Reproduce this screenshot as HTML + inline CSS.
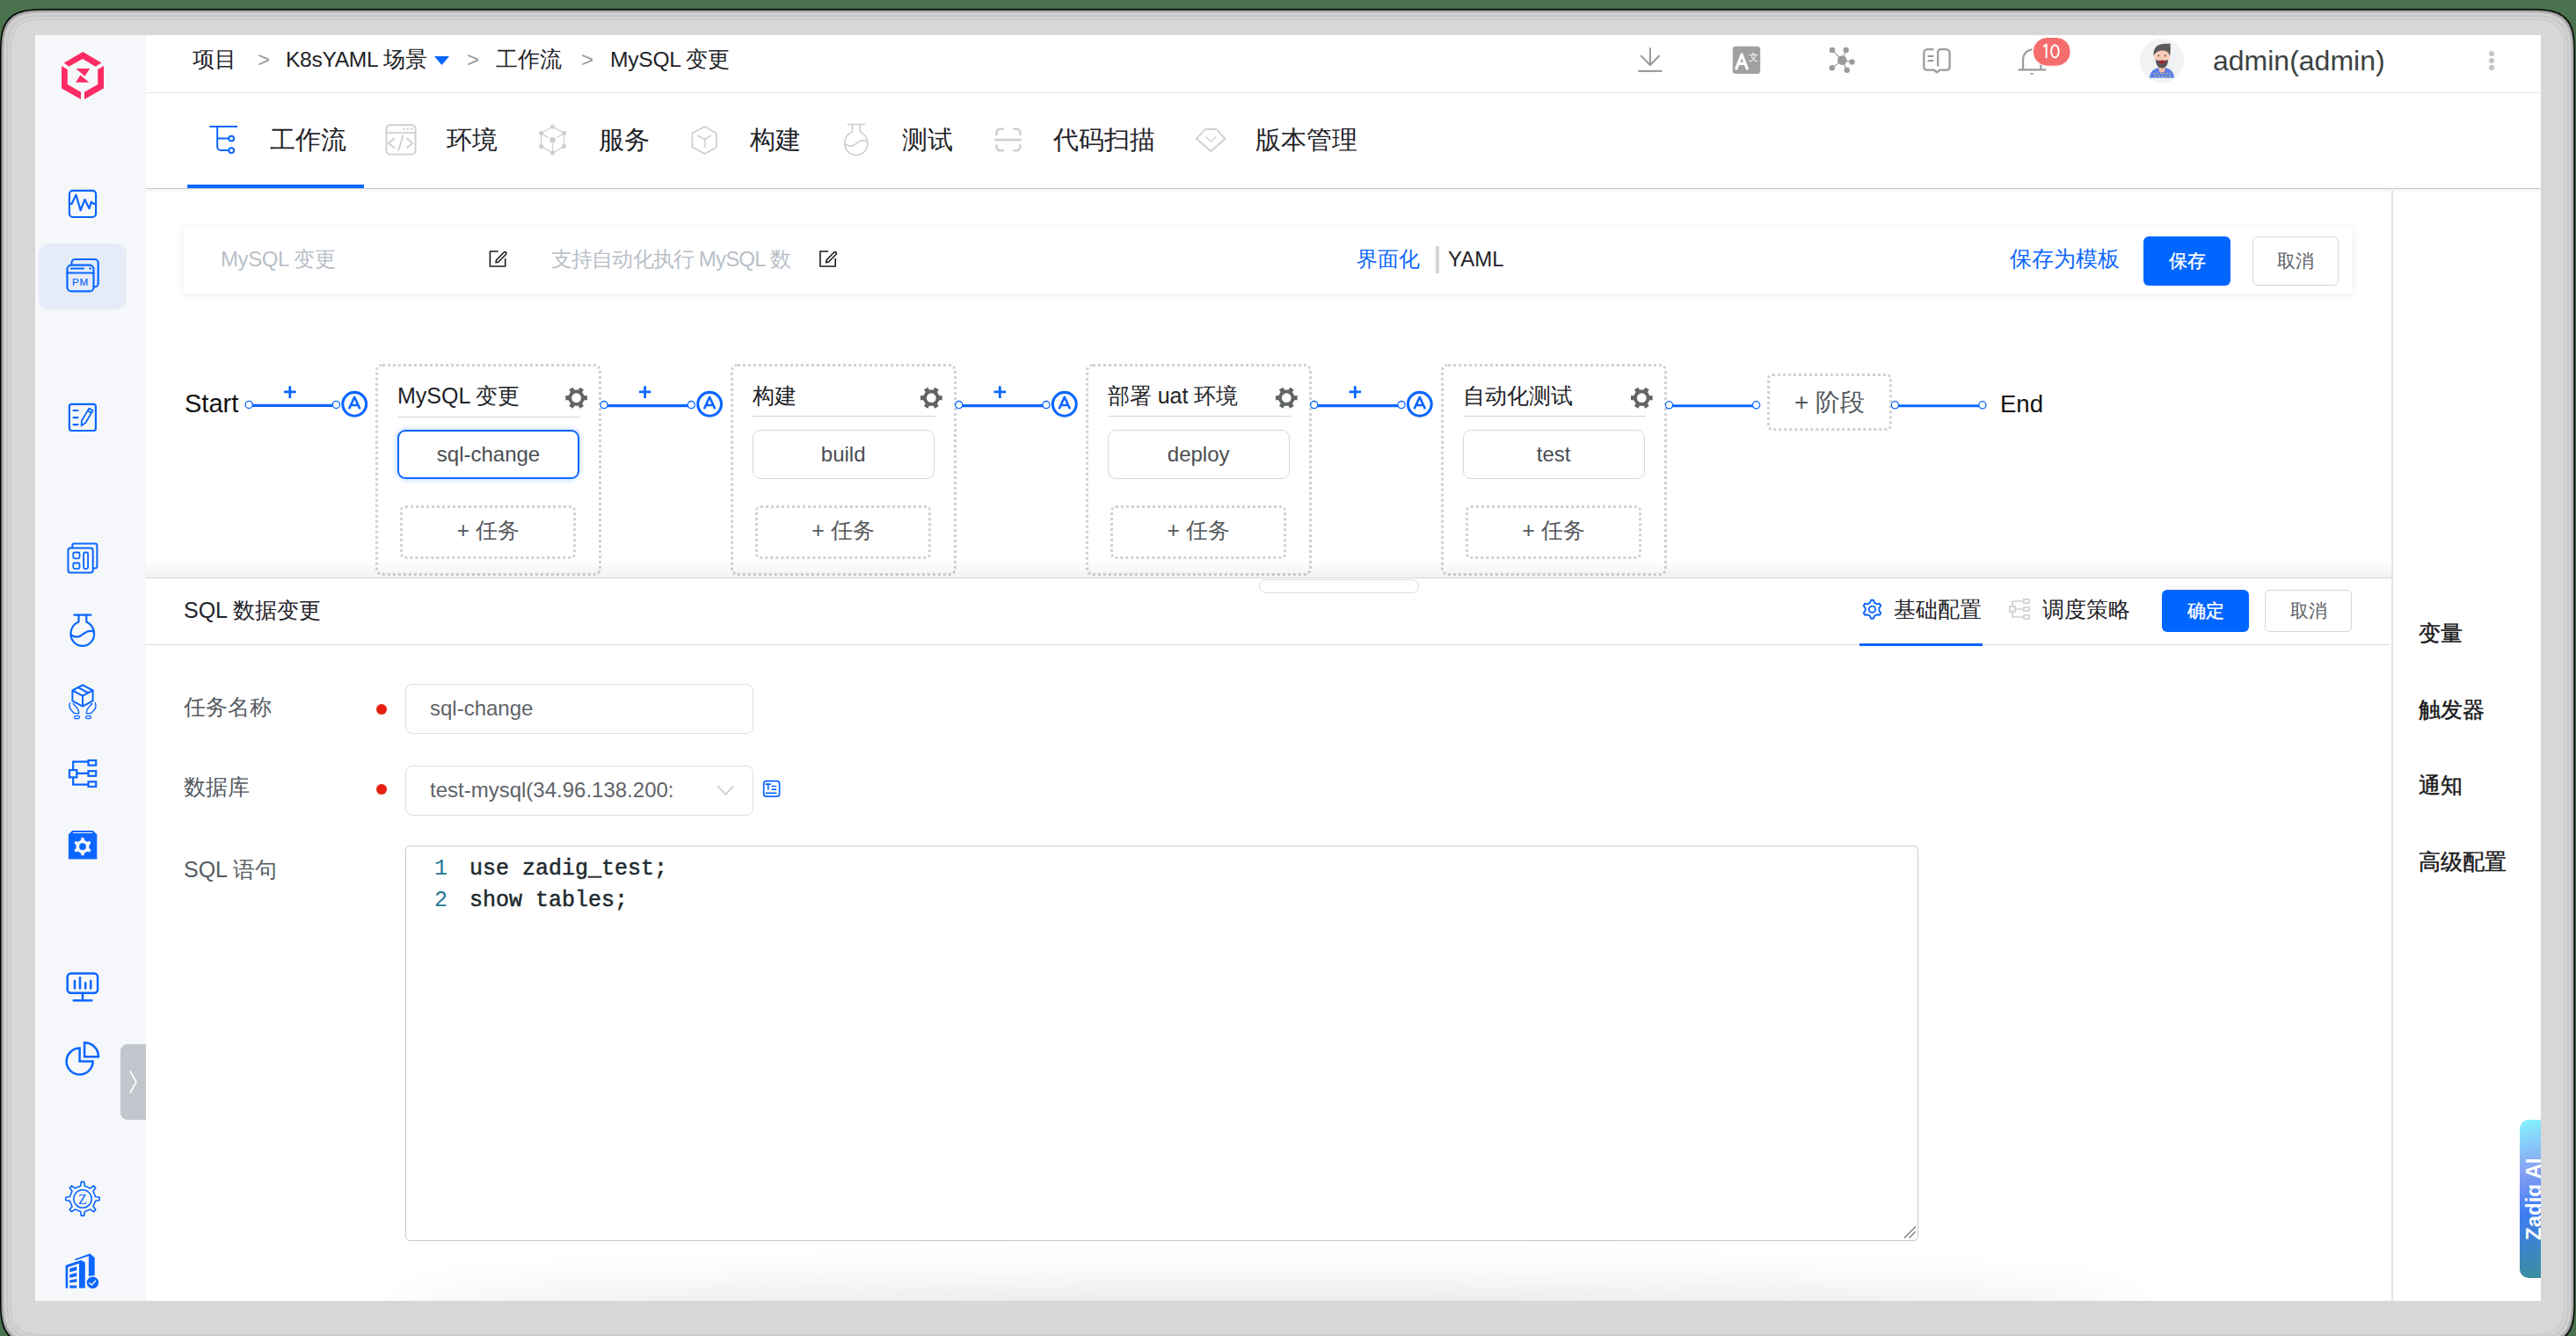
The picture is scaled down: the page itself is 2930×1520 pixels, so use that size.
<!DOCTYPE html>
<html><head><meta charset="utf-8">
<style>
*{margin:0;padding:0;box-sizing:border-box;}
html,body{width:2930px;height:1520px;overflow:hidden;background:#4a724e;font-family:"Liberation Sans",sans-serif;}
.a{position:absolute;}
.t{position:absolute;white-space:nowrap;line-height:1;}
svg{position:absolute;overflow:visible;}
#frame{position:absolute;left:0px;top:10px;width:2929px;height:1530px;border-radius:52px;background:#d7d7d7;border:1.5px solid #000;box-shadow:inset 0 0 0 1px #8e8e8e, inset 0 0 0 2px #a6a6a6, inset 0 0 0 4px #c8c8c8, inset 0 0 0 5px #d6d6d6, inset 0 0 0 6px #c4c4c4, inset 0 0 0 9px #d4d4d4, inset 0 0 0 10px #cacaca;}
#app{position:absolute;left:40px;top:40px;width:2850px;height:1440px;background:#fff;overflow:hidden;}
#side{position:absolute;left:0;top:0;width:126px;height:1440px;background:#f5f7fa;}
.bc{font-size:24.6px;color:#1f2329;}
.gt{color:#9a9a9a;font-size:24px;}
.tab{font-size:28.6px;color:#1f2329;}
.tb{font-size:24px;}
.btn{position:absolute;border-radius:6px;font-size:21px;text-align:center;}
.stage{position:absolute;top:374px;width:257px;height:241px;border:3px dotted #cdd2d9;border-radius:8px;}
.stitle{position:absolute;font-size:25px;color:#1f2329;white-space:nowrap;line-height:1;}
.sdiv{position:absolute;height:1.3px;background:#d0d5dc;}
.job{position:absolute;height:56px;border:1.5px solid #d3d8df;border-radius:9px;font-size:24px;color:#4a4d52;text-align:center;line-height:53px;}
.addjob{position:absolute;height:61px;border:3px dotted #cdd2d9;border-radius:6px;font-size:25px;color:#55595e;text-align:center;line-height:51px;}
.lbl{font-size:25px;color:#555b61;}
.inp{position:absolute;border:1.5px solid #dcdfe6;border-radius:8px;background:#fff;}
.rc{font-size:25px;color:#1a1a1a;-webkit-text-stroke:0.45px #1a1a1a;}
</style></head><body><svg style="position:absolute;left:0;top:0;" width="2930" height="1520"><path d="M2929.00 66.00 L2928.93 54.74 L2928.72 49.10 L2928.36 44.59 L2927.87 40.71 L2927.23 37.28 L2926.45 34.17 L2925.53 31.34 L2924.46 28.75 L2923.24 26.37 L2921.87 24.18 L2920.35 22.17 L2918.67 20.33 L2916.83 18.65 L2914.82 17.13 L2912.63 15.76 L2910.25 14.54 L2907.66 13.47 L2904.83 12.55 L2901.72 11.77 L2898.29 11.13 L2894.41 10.64 L2889.90 10.28 L2884.26 10.07 L2873.00 10.00 L56.00 10.00 L44.74 10.07 L39.10 10.28 L34.59 10.64 L30.71 11.13 L27.28 11.77 L24.17 12.55 L21.34 13.47 L18.75 14.54 L16.37 15.76 L14.18 17.13 L12.17 18.65 L10.33 20.33 L8.65 22.17 L7.13 24.18 L5.76 26.37 L4.54 28.75 L3.47 31.34 L2.55 34.17 L1.77 37.28 L1.13 40.71 L0.64 44.59 L0.28 49.10 L0.07 54.74 L0.00 66.00 L0.00 1475.00 L0.07 1486.26 L0.28 1491.90 L0.64 1496.41 L1.13 1500.29 L1.77 1503.72 L2.55 1506.83 L3.47 1509.66 L4.54 1512.25 L5.76 1514.63 L7.13 1516.82 L8.65 1518.83 L10.33 1520.67 L12.17 1522.35 L14.18 1523.87 L16.37 1525.24 L18.75 1526.46 L21.34 1527.53 L24.17 1528.45 L27.28 1529.23 L30.71 1529.87 L34.59 1530.36 L39.10 1530.72 L44.74 1530.93 L56.00 1531.00 L2873.00 1531.00 L2884.26 1530.93 L2889.90 1530.72 L2894.41 1530.36 L2898.29 1529.87 L2901.72 1529.23 L2904.83 1528.45 L2907.66 1527.53 L2910.25 1526.46 L2912.63 1525.24 L2914.82 1523.87 L2916.83 1522.35 L2918.67 1520.67 L2920.35 1518.83 L2921.87 1516.82 L2923.24 1514.63 L2924.46 1512.25 L2925.53 1509.66 L2926.45 1506.83 L2927.23 1503.72 L2927.87 1500.29 L2928.36 1496.41 L2928.72 1491.90 L2928.93 1486.26 L2929.00 1475.00Z" fill="#000"/><path d="M2927.60 66.00 L2927.53 55.02 L2927.32 49.52 L2926.98 45.12 L2926.50 41.35 L2925.88 37.99 L2925.12 34.97 L2924.21 32.21 L2923.17 29.68 L2921.98 27.36 L2920.65 25.22 L2919.17 23.26 L2917.53 21.47 L2915.74 19.83 L2913.78 18.35 L2911.64 17.02 L2909.32 15.83 L2906.79 14.79 L2904.03 13.88 L2901.01 13.12 L2897.65 12.50 L2893.88 12.02 L2889.48 11.68 L2883.98 11.47 L2873.00 11.40 L56.00 11.40 L45.02 11.47 L39.52 11.68 L35.12 12.02 L31.35 12.50 L27.99 13.12 L24.97 13.88 L22.21 14.79 L19.68 15.83 L17.36 17.02 L15.22 18.35 L13.26 19.83 L11.47 21.47 L9.83 23.26 L8.35 25.22 L7.02 27.36 L5.83 29.68 L4.79 32.21 L3.88 34.97 L3.12 37.99 L2.50 41.35 L2.02 45.12 L1.68 49.52 L1.47 55.02 L1.40 66.00 L1.40 1475.00 L1.47 1485.98 L1.68 1491.48 L2.02 1495.88 L2.50 1499.65 L3.12 1503.01 L3.88 1506.03 L4.79 1508.79 L5.83 1511.32 L7.02 1513.64 L8.35 1515.78 L9.83 1517.74 L11.47 1519.53 L13.26 1521.17 L15.22 1522.65 L17.36 1523.98 L19.68 1525.17 L22.21 1526.21 L24.97 1527.12 L27.99 1527.88 L31.35 1528.50 L35.12 1528.98 L39.52 1529.32 L45.02 1529.53 L56.00 1529.60 L2873.00 1529.60 L2883.98 1529.53 L2889.48 1529.32 L2893.88 1528.98 L2897.65 1528.50 L2901.01 1527.88 L2904.03 1527.12 L2906.79 1526.21 L2909.32 1525.17 L2911.64 1523.98 L2913.78 1522.65 L2915.74 1521.17 L2917.53 1519.53 L2919.17 1517.74 L2920.65 1515.78 L2921.98 1513.64 L2923.17 1511.32 L2924.21 1508.79 L2925.12 1506.03 L2925.88 1503.01 L2926.50 1499.65 L2926.98 1495.88 L2927.32 1491.48 L2927.53 1485.98 L2927.60 1475.00Z" fill="#8e8e8e"/><path d="M2926.60 66.00 L2926.53 55.22 L2926.33 49.82 L2925.99 45.50 L2925.52 41.80 L2924.91 38.51 L2924.16 35.54 L2923.28 32.83 L2922.25 30.35 L2921.09 28.07 L2919.78 25.97 L2918.32 24.05 L2916.71 22.29 L2914.95 20.68 L2913.03 19.22 L2910.93 17.91 L2908.65 16.75 L2906.17 15.72 L2903.46 14.84 L2900.49 14.09 L2897.20 13.48 L2893.50 13.01 L2889.18 12.67 L2883.78 12.47 L2873.00 12.40 L56.00 12.40 L45.22 12.47 L39.82 12.67 L35.50 13.01 L31.80 13.48 L28.51 14.09 L25.54 14.84 L22.83 15.72 L20.35 16.75 L18.07 17.91 L15.97 19.22 L14.05 20.68 L12.29 22.29 L10.68 24.05 L9.22 25.97 L7.91 28.07 L6.75 30.35 L5.72 32.83 L4.84 35.54 L4.09 38.51 L3.48 41.80 L3.01 45.50 L2.67 49.82 L2.47 55.22 L2.40 66.00 L2.40 1475.00 L2.47 1485.78 L2.67 1491.18 L3.01 1495.50 L3.48 1499.20 L4.09 1502.49 L4.84 1505.46 L5.72 1508.17 L6.75 1510.65 L7.91 1512.93 L9.22 1515.03 L10.68 1516.95 L12.29 1518.71 L14.05 1520.32 L15.97 1521.78 L18.07 1523.09 L20.35 1524.25 L22.83 1525.28 L25.54 1526.16 L28.51 1526.91 L31.80 1527.52 L35.50 1527.99 L39.82 1528.33 L45.22 1528.53 L56.00 1528.60 L2873.00 1528.60 L2883.78 1528.53 L2889.18 1528.33 L2893.50 1527.99 L2897.20 1527.52 L2900.49 1526.91 L2903.46 1526.16 L2906.17 1525.28 L2908.65 1524.25 L2910.93 1523.09 L2913.03 1521.78 L2914.95 1520.32 L2916.71 1518.71 L2918.32 1516.95 L2919.78 1515.03 L2921.09 1512.93 L2922.25 1510.65 L2923.28 1508.17 L2924.16 1505.46 L2924.91 1502.49 L2925.52 1499.20 L2925.99 1495.50 L2926.33 1491.18 L2926.53 1485.78 L2926.60 1475.00Z" fill="#a9a9a9"/><path d="M2925.40 66.00 L2925.33 55.47 L2925.14 50.18 L2924.81 45.96 L2924.34 42.34 L2923.75 39.12 L2923.02 36.22 L2922.15 33.57 L2921.15 31.15 L2920.01 28.92 L2918.73 26.87 L2917.31 24.99 L2915.74 23.26 L2914.01 21.69 L2912.13 20.27 L2910.08 18.99 L2907.85 17.85 L2905.43 16.85 L2902.78 15.98 L2899.88 15.25 L2896.66 14.66 L2893.04 14.19 L2888.82 13.86 L2883.53 13.67 L2873.00 13.60 L56.00 13.60 L45.47 13.67 L40.18 13.86 L35.96 14.19 L32.34 14.66 L29.12 15.25 L26.22 15.98 L23.57 16.85 L21.15 17.85 L18.92 18.99 L16.87 20.27 L14.99 21.69 L13.26 23.26 L11.69 24.99 L10.27 26.87 L8.99 28.92 L7.85 31.15 L6.85 33.57 L5.98 36.22 L5.25 39.12 L4.66 42.34 L4.19 45.96 L3.86 50.18 L3.67 55.47 L3.60 66.00 L3.60 1475.00 L3.67 1485.53 L3.86 1490.82 L4.19 1495.04 L4.66 1498.66 L5.25 1501.88 L5.98 1504.78 L6.85 1507.43 L7.85 1509.85 L8.99 1512.08 L10.27 1514.13 L11.69 1516.01 L13.26 1517.74 L14.99 1519.31 L16.87 1520.73 L18.92 1522.01 L21.15 1523.15 L23.57 1524.15 L26.22 1525.02 L29.12 1525.75 L32.34 1526.34 L35.96 1526.81 L40.18 1527.14 L45.47 1527.33 L56.00 1527.40 L2873.00 1527.40 L2883.53 1527.33 L2888.82 1527.14 L2893.04 1526.81 L2896.66 1526.34 L2899.88 1525.75 L2902.78 1525.02 L2905.43 1524.15 L2907.85 1523.15 L2910.08 1522.01 L2912.13 1520.73 L2914.01 1519.31 L2915.74 1517.74 L2917.31 1516.01 L2918.73 1514.13 L2920.01 1512.08 L2921.15 1509.85 L2922.15 1507.43 L2923.02 1504.78 L2923.75 1501.88 L2924.34 1498.66 L2924.81 1495.04 L2925.14 1490.82 L2925.33 1485.53 L2925.40 1475.00Z" fill="#c3c3c3"/><path d="M2924.00 66.00 L2923.94 55.75 L2923.74 50.60 L2923.42 46.50 L2922.97 42.97 L2922.39 39.84 L2921.68 37.01 L2920.84 34.44 L2919.86 32.08 L2918.75 29.91 L2917.51 27.91 L2916.12 26.08 L2914.59 24.41 L2912.92 22.88 L2911.09 21.49 L2909.09 20.25 L2906.92 19.14 L2904.56 18.16 L2901.99 17.32 L2899.16 16.61 L2896.03 16.03 L2892.50 15.58 L2888.40 15.26 L2883.25 15.06 L2873.00 15.00 L56.00 15.00 L45.75 15.06 L40.60 15.26 L36.50 15.58 L32.97 16.03 L29.84 16.61 L27.01 17.32 L24.44 18.16 L22.08 19.14 L19.91 20.25 L17.91 21.49 L16.08 22.88 L14.41 24.41 L12.88 26.08 L11.49 27.91 L10.25 29.91 L9.14 32.08 L8.16 34.44 L7.32 37.01 L6.61 39.84 L6.03 42.97 L5.58 46.50 L5.26 50.60 L5.06 55.75 L5.00 66.00 L5.00 1475.00 L5.06 1485.25 L5.26 1490.40 L5.58 1494.50 L6.03 1498.03 L6.61 1501.16 L7.32 1503.99 L8.16 1506.56 L9.14 1508.92 L10.25 1511.09 L11.49 1513.09 L12.88 1514.92 L14.41 1516.59 L16.08 1518.12 L17.91 1519.51 L19.91 1520.75 L22.08 1521.86 L24.44 1522.84 L27.01 1523.68 L29.84 1524.39 L32.97 1524.97 L36.50 1525.42 L40.60 1525.74 L45.75 1525.94 L56.00 1526.00 L2873.00 1526.00 L2883.25 1525.94 L2888.40 1525.74 L2892.50 1525.42 L2896.03 1524.97 L2899.16 1524.39 L2901.99 1523.68 L2904.56 1522.84 L2906.92 1521.86 L2909.09 1520.75 L2911.09 1519.51 L2912.92 1518.12 L2914.59 1516.59 L2916.12 1514.92 L2917.51 1513.09 L2918.75 1511.09 L2919.86 1508.92 L2920.84 1506.56 L2921.68 1503.99 L2922.39 1501.16 L2922.97 1498.03 L2923.42 1494.50 L2923.74 1490.40 L2923.94 1485.25 L2924.00 1475.00Z" fill="#d2d2d2"/><path d="M2922.00 66.00 L2921.94 56.15 L2921.75 51.21 L2921.44 47.26 L2921.01 43.87 L2920.45 40.87 L2919.77 38.15 L2918.96 35.68 L2918.02 33.41 L2916.96 31.32 L2915.76 29.41 L2914.43 27.65 L2912.96 26.04 L2911.35 24.57 L2909.59 23.24 L2907.68 22.04 L2905.59 20.98 L2903.32 20.04 L2900.85 19.23 L2898.13 18.55 L2895.13 17.99 L2891.74 17.56 L2887.79 17.25 L2882.85 17.06 L2873.00 17.00 L56.00 17.00 L46.15 17.06 L41.21 17.25 L37.26 17.56 L33.87 17.99 L30.87 18.55 L28.15 19.23 L25.68 20.04 L23.41 20.98 L21.32 22.04 L19.41 23.24 L17.65 24.57 L16.04 26.04 L14.57 27.65 L13.24 29.41 L12.04 31.32 L10.98 33.41 L10.04 35.68 L9.23 38.15 L8.55 40.87 L7.99 43.87 L7.56 47.26 L7.25 51.21 L7.06 56.15 L7.00 66.00 L7.00 1475.00 L7.06 1484.85 L7.25 1489.79 L7.56 1493.74 L7.99 1497.13 L8.55 1500.13 L9.23 1502.85 L10.04 1505.32 L10.98 1507.59 L12.04 1509.68 L13.24 1511.59 L14.57 1513.35 L16.04 1514.96 L17.65 1516.43 L19.41 1517.76 L21.32 1518.96 L23.41 1520.02 L25.68 1520.96 L28.15 1521.77 L30.87 1522.45 L33.87 1523.01 L37.26 1523.44 L41.21 1523.75 L46.15 1523.94 L56.00 1524.00 L2873.00 1524.00 L2882.85 1523.94 L2887.79 1523.75 L2891.74 1523.44 L2895.13 1523.01 L2898.13 1522.45 L2900.85 1521.77 L2903.32 1520.96 L2905.59 1520.02 L2907.68 1518.96 L2909.59 1517.76 L2911.35 1516.43 L2912.96 1514.96 L2914.43 1513.35 L2915.76 1511.59 L2916.96 1509.68 L2918.02 1507.59 L2918.96 1505.32 L2919.77 1502.85 L2920.45 1500.13 L2921.01 1497.13 L2921.44 1493.74 L2921.75 1489.79 L2921.94 1484.85 L2922.00 1475.00Z" fill="#c8c8c8"/><path d="M2920.00 66.00 L2919.94 56.55 L2919.76 51.81 L2919.47 48.03 L2919.05 44.78 L2918.52 41.89 L2917.86 39.29 L2917.09 36.91 L2916.19 34.74 L2915.16 32.74 L2914.02 30.90 L2912.74 29.21 L2911.33 27.67 L2909.79 26.26 L2908.10 24.98 L2906.26 23.84 L2904.26 22.81 L2902.09 21.91 L2899.71 21.14 L2897.11 20.48 L2894.22 19.95 L2890.97 19.53 L2887.19 19.24 L2882.45 19.06 L2873.00 19.00 L56.00 19.00 L46.55 19.06 L41.81 19.24 L38.03 19.53 L34.78 19.95 L31.89 20.48 L29.29 21.14 L26.91 21.91 L24.74 22.81 L22.74 23.84 L20.90 24.98 L19.21 26.26 L17.67 27.67 L16.26 29.21 L14.98 30.90 L13.84 32.74 L12.81 34.74 L11.91 36.91 L11.14 39.29 L10.48 41.89 L9.95 44.78 L9.53 48.03 L9.24 51.81 L9.06 56.55 L9.00 66.00 L9.00 1475.00 L9.06 1484.45 L9.24 1489.19 L9.53 1492.97 L9.95 1496.22 L10.48 1499.11 L11.14 1501.71 L11.91 1504.09 L12.81 1506.26 L13.84 1508.26 L14.98 1510.10 L16.26 1511.79 L17.67 1513.33 L19.21 1514.74 L20.90 1516.02 L22.74 1517.16 L24.74 1518.19 L26.91 1519.09 L29.29 1519.86 L31.89 1520.52 L34.78 1521.05 L38.03 1521.47 L41.81 1521.76 L46.55 1521.94 L56.00 1522.00 L2873.00 1522.00 L2882.45 1521.94 L2887.19 1521.76 L2890.97 1521.47 L2894.22 1521.05 L2897.11 1520.52 L2899.71 1519.86 L2902.09 1519.09 L2904.26 1518.19 L2906.26 1517.16 L2908.10 1516.02 L2909.79 1514.74 L2911.33 1513.33 L2912.74 1511.79 L2914.02 1510.10 L2915.16 1508.26 L2916.19 1506.26 L2917.09 1504.09 L2917.86 1501.71 L2918.52 1499.11 L2919.05 1496.22 L2919.47 1492.97 L2919.76 1489.19 L2919.94 1484.45 L2920.00 1475.00Z" fill="#d3d3d3"/><path d="M2918.00 66.00 L2917.94 56.95 L2917.77 52.42 L2917.49 48.79 L2917.09 45.68 L2916.58 42.92 L2915.95 40.42 L2915.21 38.15 L2914.35 36.07 L2913.37 34.15 L2912.27 32.39 L2911.05 30.78 L2909.70 29.30 L2908.22 27.95 L2906.61 26.73 L2904.85 25.63 L2902.93 24.65 L2900.85 23.79 L2898.58 23.05 L2896.08 22.42 L2893.32 21.91 L2890.21 21.51 L2886.58 21.23 L2882.05 21.06 L2873.00 21.00 L56.00 21.00 L46.95 21.06 L42.42 21.23 L38.79 21.51 L35.68 21.91 L32.92 22.42 L30.42 23.05 L28.15 23.79 L26.07 24.65 L24.15 25.63 L22.39 26.73 L20.78 27.95 L19.30 29.30 L17.95 30.78 L16.73 32.39 L15.63 34.15 L14.65 36.07 L13.79 38.15 L13.05 40.42 L12.42 42.92 L11.91 45.68 L11.51 48.79 L11.23 52.42 L11.06 56.95 L11.00 66.00 L11.00 1475.00 L11.06 1484.05 L11.23 1488.58 L11.51 1492.21 L11.91 1495.32 L12.42 1498.08 L13.05 1500.58 L13.79 1502.85 L14.65 1504.93 L15.63 1506.85 L16.73 1508.61 L17.95 1510.22 L19.30 1511.70 L20.78 1513.05 L22.39 1514.27 L24.15 1515.37 L26.07 1516.35 L28.15 1517.21 L30.42 1517.95 L32.92 1518.58 L35.68 1519.09 L38.79 1519.49 L42.42 1519.77 L46.95 1519.94 L56.00 1520.00 L2873.00 1520.00 L2882.05 1519.94 L2886.58 1519.77 L2890.21 1519.49 L2893.32 1519.09 L2896.08 1518.58 L2898.58 1517.95 L2900.85 1517.21 L2902.93 1516.35 L2904.85 1515.37 L2906.61 1514.27 L2908.22 1513.05 L2909.70 1511.70 L2911.05 1510.22 L2912.27 1508.61 L2913.37 1506.85 L2914.35 1504.93 L2915.21 1502.85 L2915.95 1500.58 L2916.58 1498.08 L2917.09 1495.32 L2917.49 1492.21 L2917.77 1488.58 L2917.94 1484.05 L2918.00 1475.00Z" fill="#cdcdcd"/><path d="M2916.00 66.00 L2915.95 57.36 L2915.78 53.02 L2915.51 49.56 L2915.13 46.58 L2914.64 43.94 L2914.04 41.56 L2913.33 39.39 L2912.51 37.40 L2911.58 35.57 L2910.53 33.89 L2909.36 32.34 L2908.07 30.93 L2906.66 29.64 L2905.11 28.47 L2903.43 27.42 L2901.60 26.49 L2899.61 25.67 L2897.44 24.96 L2895.06 24.36 L2892.42 23.87 L2889.44 23.49 L2885.98 23.22 L2881.64 23.05 L2873.00 23.00 L56.00 23.00 L47.36 23.05 L43.02 23.22 L39.56 23.49 L36.58 23.87 L33.94 24.36 L31.56 24.96 L29.39 25.67 L27.40 26.49 L25.57 27.42 L23.89 28.47 L22.34 29.64 L20.93 30.93 L19.64 32.34 L18.47 33.89 L17.42 35.57 L16.49 37.40 L15.67 39.39 L14.96 41.56 L14.36 43.94 L13.87 46.58 L13.49 49.56 L13.22 53.02 L13.05 57.36 L13.00 66.00 L13.00 1475.00 L13.05 1483.64 L13.22 1487.98 L13.49 1491.44 L13.87 1494.42 L14.36 1497.06 L14.96 1499.44 L15.67 1501.61 L16.49 1503.60 L17.42 1505.43 L18.47 1507.11 L19.64 1508.66 L20.93 1510.07 L22.34 1511.36 L23.89 1512.53 L25.57 1513.58 L27.40 1514.51 L29.39 1515.33 L31.56 1516.04 L33.94 1516.64 L36.58 1517.13 L39.56 1517.51 L43.02 1517.78 L47.36 1517.95 L56.00 1518.00 L2873.00 1518.00 L2881.64 1517.95 L2885.98 1517.78 L2889.44 1517.51 L2892.42 1517.13 L2895.06 1516.64 L2897.44 1516.04 L2899.61 1515.33 L2901.60 1514.51 L2903.43 1513.58 L2905.11 1512.53 L2906.66 1511.36 L2908.07 1510.07 L2909.36 1508.66 L2910.53 1507.11 L2911.58 1505.43 L2912.51 1503.60 L2913.33 1501.61 L2914.04 1499.44 L2914.64 1497.06 L2915.13 1494.42 L2915.51 1491.44 L2915.78 1487.98 L2915.95 1483.64 L2916.00 1475.00Z" fill="#d7d7d7"/></svg>
<div id="app"></div>
<div class="a" style="left:40px;top:40px;width:126px;height:1440px;background:#f5f7fa;"></div>
<div class="a" style="left:44px;top:277px;width:100px;height:75px;border-radius:12px;background:#e5ecf8;"></div>
<!-- header -->
<div class="a" style="left:166px;top:105px;width:2724px;height:1px;background:#e4e7eb;"></div>
<span class="t bc" style="left:219px;top:56px;">项目</span>
<span class="t gt" style="left:293px;top:56px;">&gt;</span>
<span class="t bc" style="left:325px;top:56px;letter-spacing:-0.3px;">K8sYAML 场景</span>
<svg style="left:494px;top:64px;" width="17" height="11"><path d="M0 0H17L8.5 10Z" fill="#0a66ff"/></svg>
<span class="t gt" style="left:531px;top:56px;">&gt;</span>
<span class="t bc" style="left:564px;top:56px;">工作流</span>
<span class="t gt" style="left:661px;top:56px;">&gt;</span>
<span class="t bc" style="left:694px;top:56px;letter-spacing:-0.25px;">MySQL 变更</span>
<!-- nav -->
<div class="a" style="left:166px;top:214px;width:2724px;height:7px;background:linear-gradient(rgba(0,0,0,0.045),rgba(0,0,0,0));"></div><div class="a" style="left:166px;top:213.5px;width:2724px;height:1.5px;background:#c6cacf;"></div>
<div class="a" style="left:213px;top:210px;width:201px;height:4px;background:#0a66ff;"></div>
<span class="t tab" style="left:307px;top:145px;">工作流</span>
<span class="t tab" style="left:508px;top:145px;">环境</span>
<span class="t tab" style="left:681px;top:145px;">服务</span>
<span class="t tab" style="left:853px;top:145px;">构建</span>
<span class="t tab" style="left:1026px;top:145px;">测试</span>
<span class="t tab" style="left:1198px;top:145px;">代码扫描</span>
<span class="t tab" style="left:1428px;top:145px;">版本管理</span>
<!-- user -->
<div class="a" style="left:2434px;top:44px;width:50px;height:50px;border-radius:50%;background:#f0f1f4;"></div>
<span class="t" style="left:2517px;top:52.5px;font-size:32px;color:#3b4242;">admin(admin)</span>
<div class="a" style="left:2831px;top:58px;width:6px;height:6px;border-radius:50%;background:#c4c4c4;"></div>
<div class="a" style="left:2831px;top:66px;width:6px;height:6px;border-radius:50%;background:#c4c4c4;"></div>
<div class="a" style="left:2831px;top:74px;width:6px;height:6px;border-radius:50%;background:#c4c4c4;"></div>
<!-- right column -->
<div class="a" style="left:2720px;top:214px;width:2px;height:1266px;background:#e3e6eb;"></div>
<span class="t rc" style="left:2751px;top:708px;">变量</span>
<span class="t rc" style="left:2751px;top:795px;">触发器</span>
<span class="t rc" style="left:2751px;top:881px;">通知</span>
<span class="t rc" style="left:2751px;top:968px;">高级配置</span>
<!-- toolbar -->
<div class="a" style="left:209px;top:258px;width:2466px;height:76px;background:#fff;box-shadow:0 2px 10px rgba(0,0,0,0.08);"></div>
<span class="t tb" style="left:251px;top:283px;color:#b9bfc8;letter-spacing:-0.4px;">MySQL 变更</span>
<span class="t tb" style="left:627px;top:283px;color:#b9bfc8;letter-spacing:-0.85px;">支持自动化执行 MySQL 数</span>
<span class="t tb" style="left:1543px;top:283px;color:#0a66ff;">界面化</span>
<div class="a" style="left:1633px;top:280px;width:4px;height:31px;background:#d3d6db;"></div>
<span class="t tb" style="left:1647px;top:283px;color:#1f2329;">YAML</span>
<span class="t tb" style="left:2286px;top:282px;color:#0a66ff;font-size:25px;">保存为模板</span>
<div class="btn" style="left:2438px;top:269px;width:99px;height:56px;background:#0066ff;color:#fff;line-height:56px;-webkit-text-stroke:0.35px #fff;">保存</div>
<div class="btn" style="left:2562px;top:269px;width:98px;height:56px;border:1.5px solid #d3d7de;color:#5a5e66;line-height:53px;">取消</div>
<!-- pipeline -->
<span class="t" style="left:210px;top:445px;font-size:29px;color:#111;">Start</span>
<span class="t" style="left:2275px;top:446px;font-size:27.5px;color:#111;">End</span>
<div class="stage" style="left:427px;top:414px;"></div>
<div class="stage" style="left:831px;top:414px;"></div>
<div class="stage" style="left:1235px;top:414px;"></div>
<div class="stage" style="left:1639px;top:414px;"></div>
<span class="stitle" style="left:452.0px;top:438px;">MySQL 变更</span>
<div class="sdiv" style="left:452.0px;top:473.5px;width:208px;"></div>
<div class="job" style="left:452.0px;top:489px;width:207px;border:2px solid #0a66ff;box-shadow:0 0 6px rgba(10,102,255,0.35);line-height:52px;">sql-change</div>
<div class="addjob" style="left:455.3px;top:575px;width:200px;">+ 任务</div>
<span class="stitle" style="left:855.7px;top:438px;">构建</span>
<div class="sdiv" style="left:855.7px;top:473px;width:208px;"></div>
<div class="job" style="left:855.7px;top:489px;width:207px;">build</div>
<div class="addjob" style="left:859.0px;top:575px;width:200px;">+ 任务</div>
<span class="stitle" style="left:1259.7px;top:438px;">部署 uat 环境</span>
<div class="sdiv" style="left:1259.7px;top:473px;width:208px;"></div>
<div class="job" style="left:1259.7px;top:489px;width:207px;">deploy</div>
<div class="addjob" style="left:1263.0px;top:575px;width:200px;">+ 任务</div>
<span class="stitle" style="left:1663.7px;top:438px;">自动化测试</span>
<div class="sdiv" style="left:1663.7px;top:473px;width:208px;"></div>
<div class="job" style="left:1663.7px;top:489px;width:207px;">test</div>
<div class="addjob" style="left:1667.0px;top:575px;width:200px;">+ 任务</div>
<div class="addjob" style="left:2010px;top:425px;width:142px;height:65px;line-height:60px;font-size:28px;">+ 阶段</div>
<!-- pipeline bottom gradient -->
<div class="a" style="left:166px;top:636px;width:2554px;height:21px;background:linear-gradient(rgba(0,0,0,0),rgba(0,0,0,0.05));"></div>
<div class="a" style="left:166px;top:656.8px;width:2554px;height:1.5px;background:#d6d6d6;"></div>
<div class="a" style="left:1432px;top:659px;width:182px;height:16px;border:1.5px solid #dedede;border-radius:8px;background:#fff;"></div>
<!-- detail header -->
<span class="t" style="left:209px;top:682px;font-size:25px;color:#1f2329;">SQL 数据变更</span>
<div class="a" style="left:166px;top:733px;width:2552px;height:1.2px;background:#d9d9d9;"></div>
<span class="t" style="left:2153.5px;top:680.5px;font-size:25px;color:#1f2329;">基础配置</span>
<span class="t" style="left:2322.5px;top:680.5px;font-size:25px;color:#1f2329;">调度策略</span>
<div class="a" style="left:2115px;top:731.8px;width:140px;height:3.4px;background:#0a66ff;"></div>
<div class="btn" style="left:2459px;top:671px;width:99px;height:48px;background:#0066ff;color:#fff;line-height:48px;-webkit-text-stroke:0.35px #fff;">确定</div>
<div class="btn" style="left:2576px;top:671px;width:99px;height:48px;border:1.5px solid #d3d7de;color:#5a5e66;line-height:45px;">取消</div>
<!-- form -->
<span class="t lbl" style="left:209px;top:792px;">任务名称</span>
<span class="t lbl" style="left:209px;top:883px;">数据库</span>
<span class="t lbl" style="left:209px;top:977px;">SQL 语句</span>
<div class="a" style="left:428px;top:801px;width:12px;height:12px;border-radius:50%;background:#e8200f;"></div>
<div class="a" style="left:428px;top:892px;width:12px;height:12px;border-radius:50%;background:#e8200f;"></div>
<div class="inp" style="left:461px;top:778px;width:396px;height:57px;"></div>
<span class="t" style="left:489px;top:794px;font-size:24px;color:#5f6368;">sql-change</span>
<div class="inp" style="left:461px;top:871px;width:396px;height:57px;"></div>
<span class="t" style="left:489px;top:887px;font-size:24px;color:#5f6368;">test-mysql(34.96.138.200:</span>
<div class="a" style="left:461px;top:962px;width:1721px;height:450px;border:1.5px solid #c9c9c9;border-radius:5px;"></div>
<span class="t" style="left:494px;top:976px;font-family:'Liberation Mono',monospace;font-size:25px;color:#237893;">1</span>
<span class="t" style="left:494px;top:1012px;font-family:'Liberation Mono',monospace;font-size:25px;color:#237893;">2</span>
<span class="t" style="left:534px;top:976px;font-family:'Liberation Mono',monospace;font-size:25px;color:#1e2a2e;-webkit-text-stroke:0.5px #1e2a2e;">use zadig_test;</span>
<span class="t" style="left:534px;top:1012px;font-family:'Liberation Mono',monospace;font-size:25px;color:#1e2a2e;-webkit-text-stroke:0.5px #1e2a2e;">show tables;</span>
<!-- bottom shadow -->
<div class="a" style="left:166px;top:1380px;width:2554px;height:100px;overflow:hidden;"><div class="a" style="left:300px;top:100px;width:1950px;height:40px;border-radius:50%;box-shadow:0 0 60px 10px rgba(0,0,0,0.12);"></div></div>
<!-- zadig ai -->
<div class="a" style="left:2866px;top:1274px;width:24px;height:180px;border-radius:10px 0 0 10px;background:linear-gradient(165deg,#84f5ff 0%,#8aa2f2 32%,#3f7cf4 58%,#3b8e9e 100%);overflow:hidden;"><span class="t" style="left:4px;top:137px;transform:rotate(-90deg);transform-origin:0 0;font-size:24px;font-weight:bold;color:#fff;">Zadig AI</span></div>
<!-- collapse tab -->
<div class="a" style="left:137px;top:1188px;width:29px;height:86px;border-radius:8px 0 0 8px;background:#c1c6cd;"></div>
<svg style="position:absolute;left:0;top:0;" width="2930" height="1520" viewBox="0 0 2930 1520" font-family="Liberation Sans"><g fill="#fe2c64"><path d="M72.8 71.5 L94.3 58.9 L115.5 71.5 L108.5 75.7 L94 67 L78.3 75.7Z"/><path d="M70 75.1 L76.8 79 L76.8 96.1 L92 104.7 L92 112.9 L70 100.5Z"/><path d="M118 75.1 L111.2 79 L111.2 96.1 L96 104.7 L96 112.9 L118 100.5Z"/><path d="M86.5 78 L102.2 78 L96.4 86.7Z"/><path d="M91.4 85.4 L101.4 93.7 L86 93.7Z"/></g><g fill="none" stroke="#0a66ff" stroke-width="2.2" stroke-linecap="round" stroke-linejoin="round"><rect x="78.9" y="216.9" width="30.2" height="30.1" rx="4"/><path d="M79 231.9 H81.5 L86.5 221.8 L91.6 239.4 L96.4 227.1 L101.5 237.2 L103.9 229.7 L106.5 231.9 H109"/><path d="M81.5 300 V299 a4 4 0 0 1 4 -4 H107.7 a4 4 0 0 1 4 4 V322.5 a4 4 0 0 1 -4 4 H107"/><rect x="76.5" y="301.6" width="30" height="29.8" rx="4.5"/><path d="M76.5 310.5 H106.5"/><path d="M81 305.5 H95"/></g><circle cx="102.6" cy="305.5" r="1.3" fill="#0a66ff"/><text x="91.6" y="325" font-family="Liberation Sans" font-size="11.6" fill="#0a66ff" stroke="#0a66ff" stroke-width="0.2" text-anchor="middle" letter-spacing="0.9">PM</text><g fill="none" stroke="#0a66ff" stroke-width="2.2" stroke-linecap="round" stroke-linejoin="round"><rect x="78.9" y="459.8" width="30" height="30.2" rx="2.5"/><path d="M83.5 467 H88.5 M83.5 475.1 H88.5 M83.5 483.1 H88.5"/><path d="M92.6 484.2 L93 478.5 L101.3 464.6 L105.6 467.1 L97.3 481 Z M99.8 467.2 L104 469.7" stroke-width="1.8"/><path d="M82.3 622.5 V620.5 a2 2 0 0 1 2 -2 H108.4 a2 2 0 0 1 2 2 V644.5 a2 2 0 0 1 -2 2 H106.5" stroke-width="2"/><rect x="77.5" y="623.6" width="28.2" height="27.8" rx="2.5" stroke-width="2"/><rect x="83.3" y="628.5" width="7.2" height="6.8" rx="1.5" stroke-width="1.8"/><rect x="83.3" y="640.5" width="7.2" height="6.6" rx="1.5" stroke-width="1.8"/><rect x="95.1" y="628.5" width="5" height="18.6" rx="1.5" stroke-width="1.8"/><path d="M84.5 699.7 H103.4"/><path d="M89.5 699.7 V707.5 C84 709.5 80.5 715 80.5 721.5 a13.3 13.3 0 0 0 26.6 0 C107.1 715 103.5 709.5 98.3 707.5 V699.7"/><path d="M81 722.7 C84 724.5 88 725.5 91.5 723.5 C95 721.5 98 717.5 103 717.8 L107 718.8"/><path d="M94 779.3 L105.6 785.5 V797.3 L94 803.6 L82.4 797.3 V785.5 Z M82.4 785.5 L94 791.7 L105.6 785.5 M94 791.7 V803.6 M89.3 782.4 L99.8 788" stroke-width="2"/><path d="M79.6 799.6 C78.5 803 79 806 81.5 808.5 L84.5 811.5 L89.6 811.9 C90 808.5 88.5 806 86 803.5 L83.2 800.5 M108.4 799.6 C109.5 803 109 806 106.5 808.5 L103.5 811.5 L98.4 811.9 C98 808.5 99.5 806 102 803.5 L104.8 800.5" stroke-width="1.4"/><rect x="84.5" y="814.6" width="6" height="3" rx="1.5" stroke-width="1.3"/><rect x="97.5" y="814.6" width="6" height="3" rx="1.5" stroke-width="1.3"/></g><g fill="none" stroke="#0a66ff" stroke-width="2.2"><rect x="79" y="876.1" width="8.3" height="8.3"/><rect x="100.5" y="865.1" width="8.7" height="5.6"/><rect x="100.5" y="877.2" width="8.7" height="5.6"/><rect x="100.5" y="889.4" width="8.7" height="5.6"/><path d="M83.2 876 V866.6 H100.5 M87.3 879.9 H100.5 M83.2 884.5 V892.6 H100.5"/></g><path d="M82.2 944.9 H105.8 L110.3 949.6 V977.4 H77.9 V949.6 Z" fill="#0a66ff"/><path d="M83.3 946.9 H104.7 L105.5 948 H82.5Z" fill="#f5f7fa"/><path d="M91.88 955.90 L92.51 953.11 L95.49 953.11 L96.12 955.90 L99.26 957.71 L101.99 956.86 L103.48 959.45 L101.38 961.39 L101.38 965.01 L103.48 966.95 L101.99 969.54 L99.26 968.69 L96.12 970.50 L95.49 973.29 L92.51 973.29 L91.88 970.50 L88.74 968.69 L86.01 969.54 L84.52 966.95 L86.62 965.01 L86.62 961.39 L84.52 959.45 L86.01 956.86 L88.74 957.71Z M90.10 963.20 a3.90 3.90 0 1 0 7.80 0 a3.90 3.90 0 1 0 -7.80 0Z" fill="#f5f7fa" fill-rule="evenodd"/><g fill="none" stroke="#0a66ff" stroke-width="2.5" stroke-linecap="round"><rect x="76.7" y="1107.4" width="34.4" height="22.3" rx="4"/><path d="M94 1130 V1138.2 M83.7 1138.2 H104.3"/><path d="M85 1116 V1124.5 M91 1112.3 V1124.5 M97.2 1118.3 V1124.5 M103.2 1116 V1124.5"/></g><g fill="none" stroke="#0a66ff" stroke-width="2.5"><path d="M90.6 1192.6 A15 15 0 1 0 105.6 1207.6 H90.6 Z"/><path d="M96.1 1186.3 V1202.2 H112 A16 16 0 0 0 96.1 1186.3Z"/></g><path d="M91.68 1349.28 L92.33 1344.67 L95.67 1344.67 L96.32 1349.28 L102.70 1351.93 L106.42 1349.13 L108.77 1351.48 L105.97 1355.20 L108.62 1361.58 L113.23 1362.23 L113.23 1365.57 L108.62 1366.22 L105.97 1372.60 L108.77 1376.32 L106.42 1378.67 L102.70 1375.87 L96.32 1378.52 L95.67 1383.13 L92.33 1383.13 L91.68 1378.52 L85.30 1375.87 L81.58 1378.67 L79.23 1376.32 L82.03 1372.60 L79.38 1366.22 L74.77 1365.57 L74.77 1362.23 L79.38 1361.58 L82.03 1355.20 L79.23 1351.48 L81.58 1349.13 L85.30 1351.93Z" fill="none" stroke="#0a66ff" stroke-width="1.6" stroke-linejoin="round"/><circle cx="94" cy="1363.9" r="10.2" fill="none" stroke="#0a66ff" stroke-width="1.5"/><text x="94" y="1369.5" font-family="Liberation Serif" font-size="16" fill="#0a66ff" text-anchor="middle">Z</text><g fill="#0a66ff"><path d="M74.6 1439.6 L92.2 1433.7 L96.8 1436.3 V1465.5 H90 V1437.5 L77.2 1441.7 V1465.5 H74.6Z"/><path d="M79.2 1443.3 L87.3 1441 V1445.3 L79.2 1447.3Z M79.2 1450.2 L87.3 1448 V1452 L79.2 1453.7Z M79.2 1456.5 L87.3 1455 V1458.5 L79.2 1459.5Z M79.2 1462.4 H87.3 V1465.5 H79.2Z"/><path d="M85 1432.6 L102.4 1426.3 L107.7 1431 V1451 L100.9 1452 V1428.9 L85.5 1434Z"/><circle cx="105.4" cy="1459.2" r="6.7"/></g><path d="M101.2 1459.3 L104.3 1462 L109 1456.7" fill="none" stroke="#f5f7fa" stroke-width="1.4"/><path d="M148 1218.5 L155 1231 L148 1243.5" fill="none" stroke="#fff" stroke-width="1.6"/><g fill="none" stroke="#0a66ff" stroke-width="2" stroke-linecap="round"><path d="M239.2 144.1 H269.4 M247.2 144.1 V167 a4 4 0 0 0 4 4 H260 M247.2 157.6 H260"/><circle cx="263.2" cy="157.6" r="2.9"/><circle cx="263.2" cy="171.1" r="2.9"/></g><g fill="none" stroke="#cfcfcf" stroke-width="1.9" stroke-linecap="round" stroke-linejoin="round"><rect x="439.5" y="142.3" width="33" height="33.3" rx="4"/><path d="M439.5 151.1 H472.5"/><path d="M448.3 157.6 L441.8 162.9 L448.3 167.9 M458.4 154.3 L453.2 171.1 M463.1 157.6 L469.3 162.9 L463.1 167.9"/></g><g fill="#cfcfcf"><circle cx="459.2" cy="146.7" r="1.2"/><circle cx="463.7" cy="146.7" r="1.2"/><circle cx="468.2" cy="146.7" r="1.2"/></g><g stroke="#cfcfcf" stroke-width="1.3" fill="none"><path d="M628.5 144.2 L615.6 151.5 V166.4 L628.5 174.1 L641.5 166.4 V151.5 Z M615.6 151.5 L623.5 156.5 M641.5 151.5 L633.5 156.5 M628.5 163.5 V174.1"/></g><g fill="#cfcfcf"><circle cx="628.5" cy="144.2" r="2.5"/><circle cx="615.6" cy="151.5" r="2.6"/><circle cx="641.5" cy="151.5" r="2.6"/><circle cx="615.6" cy="166.4" r="2.6"/><circle cx="641.5" cy="166.4" r="2.6"/><circle cx="628.5" cy="174.1" r="2.5"/><circle cx="628.5" cy="159.3" r="3.4"/></g><g fill="none" stroke="#cfcfcf" stroke-width="1.7" stroke-linecap="round" stroke-linejoin="round"><path d="M801.6 144 L814.9 151.8 V167.4 L801.6 175 L787.4 167.4 V151.8 Z M793.8 154.3 L801.6 158.4 L808.6 154.3 M801.6 158.4 V167.4"/><path d="M964.5 141.5 H983.2"/><path d="M969.5 141.5 V150 C964.5 152 960.8 157 960.8 163.5 a13 13 0 0 0 26 0 C986.8 157 983 152 978.3 150 V141.5"/><path d="M961.3 164.2 C964.5 166 968 167 971.5 165 C975 163 977.5 159.5 982 159.7 L986.5 160.8"/></g><g fill="none" stroke="#cfcfcf" stroke-width="2.6"><path d="M1141.8 146.8 H1137.5 a4 4 0 0 0 -4 4 V153.9 M1152 146.8 H1156.3 a4 4 0 0 1 4 4 V153.9 M1133.5 164.6 V167.2 a4 4 0 0 0 4 4 H1141.8 M1160.3 164.6 V167.2 a4 4 0 0 1 -4 4 H1152"/><path d="M1131.2 159.1 H1162"/></g><g fill="none" stroke="#cfcfcf" stroke-width="1.8" stroke-linejoin="round"><path d="M1371 147 H1383.6 L1393.6 157.8 L1377.3 172 L1360.7 157.8 Z"/><path d="M1371.3 155.4 L1377.3 160.8 L1383.2 155.4" stroke-width="1.3"/></g><g fill="none" stroke="#9b9b9b" stroke-width="2.1" stroke-linecap="round"><path d="M1876.9 55 V73.8 M1866.8 63.8 L1876.9 73.9 L1887 63.8 M1864.2 80.9 H1889.6"/></g><rect x="1970.8" y="52.8" width="31.4" height="31.3" rx="3.5" fill="#a0a0a0"/><path d="M1974.9 78 L1981.1 62 L1987.3 78 M1977.3 72.3 H1984.9" fill="none" stroke="#fff" stroke-width="3.3" stroke-linecap="round" stroke-linejoin="round"/><text x="1994.7" y="68.8" font-size="11" fill="#fff" text-anchor="middle">文</text><g stroke="#9b9b9b" stroke-width="1.1"><path d="M2095.3 68.6 L2084 56.9 M2095.3 68.6 L2099.7 56.9 M2095.3 68.6 L2106.5 70.4 M2095.3 68.6 L2083.8 77.3 M2095.3 68.6 L2100.7 79.8"/></g><g fill="#9b9b9b"><circle cx="2095.3" cy="68.6" r="5.3"/><circle cx="2084" cy="56.9" r="3.2"/><circle cx="2099.7" cy="56.9" r="3.2"/><circle cx="2106.5" cy="70.4" r="3.2"/><circle cx="2083.8" cy="77.3" r="3.2"/><circle cx="2100.7" cy="79.8" r="3.2"/></g><g fill="none" stroke="#9b9b9b" stroke-width="2.3" stroke-linecap="round" stroke-linejoin="round"><path d="M2198.6 56.1 H2192.3 a4 4 0 0 0 -4 4 V76.6 a3 3 0 0 0 3 3 H2199.8 L2203.1 82.4 L2206.4 79.6 H2214.6 a3 3 0 0 0 3 -3 V60.1 a4 4 0 0 0 -4 -4 H2207.2 a3 3 0 0 0 -3 3 V74.5"/><path d="M2193.5 63.9 H2198.3 M2193.5 69.2 H2198.3"/></g><g fill="none" stroke="#9b9b9b" stroke-width="2.2" stroke-linecap="round"><path d="M2301.1 78.6 V67.5 C2301.1 61.5 2305 57.2 2310.6 56.3 M2321.3 74.3 V78.6 M2296.3 79.4 H2326.4"/></g><path d="M2309.2 83 h3.8 a1.9 1.9 0 0 1 -3.8 0Z" fill="#9b9b9b"/><rect x="2312.2" y="42.4" width="43" height="32.8" rx="16.4" fill="#f56c6c" stroke="#fff" stroke-width="1"/><path d="M2324.2 53.2 L2327.6 50.6 V66.2" fill="none" stroke="#fff" stroke-width="2" stroke-linejoin="round"/><ellipse cx="2337.4" cy="58.3" rx="4.3" ry="7.1" fill="none" stroke="#fff" stroke-width="2"/><circle cx="2459" cy="69.4" r="24.8" fill="#f1f2f4"/><path d="M2445 88.5 C2446 80 2450.5 77 2459 77 C2467.5 77 2472 80 2473 88.5Z" fill="#5b7fe6"/><path d="M2455.5 74 h7 v5 a3.5 3.5 0 0 1 -7 0Z" fill="#f5b9a8"/><ellipse cx="2459" cy="64.5" rx="8.8" ry="9.5" fill="#f8cbb8"/><path d="M2449.5 64 C2449 55 2453 50.5 2460 50 L2468.5 49.5 C2469 55 2468.8 60 2468 64 C2467 60 2465 57.5 2460 57.5 C2454 57.5 2451 60 2449.5 64Z" fill="#5a5a5a"/><path d="M2452 67.8 C2452 75.5 2456 77.5 2459 77.5 C2462 77.5 2466 75.5 2466 67.8 C2464 69.5 2462 68.5 2459 68.5 C2456 68.5 2454 69.5 2452 67.8Z" fill="#555"/><path d="M2455.5 69.5 H2462.5 L2461.5 72 H2456.5Z" fill="#b8182a"/><circle cx="2455.3" cy="63.3" r="0.9" fill="#444"/><circle cx="2462.7" cy="63.3" r="0.9" fill="#444"/><g fill="#e8d26a"><rect x="2450" y="83" width="1.5" height="1" /><rect x="2453.5" y="83" width="1.5" height="1"/><rect x="2457" y="83" width="1.5" height="1"/><rect x="2460.5" y="83" width="1.5" height="1"/><rect x="2464" y="83" width="1.5" height="1"/><rect x="2467.5" y="83" width="1.5" height="1"/><rect x="2451" y="86" width="1.5" height="1"/><rect x="2455" y="86" width="1.5" height="1"/><rect x="2459" y="86" width="1.5" height="1"/><rect x="2463" y="86" width="1.5" height="1"/><rect x="2467" y="86" width="1.5" height="1"/></g><g transform="translate(0.0 0)" fill="none" stroke="#1c1c1c" stroke-width="1.6" stroke-linejoin="round"><path d="M566.6 286 H557.4 V303 H574.7 V293.9"/><path d="M564.5 296 L573 287.2 a1.6 1.6 0 0 1 2.4 2.3 L566.7 298.3 L564 298.8Z"/></g><g transform="translate(375.5 0)" fill="none" stroke="#1c1c1c" stroke-width="1.6" stroke-linejoin="round"><path d="M566.6 286 H557.4 V303 H574.7 V293.9"/><path d="M564.5 296 L573 287.2 a1.6 1.6 0 0 1 2.4 2.3 L566.7 298.3 L564 298.8Z"/></g><path d="M283.2 461.4 H382.4" stroke="#0a66ff" stroke-width="3.1"/><circle cx="283.2" cy="460.4" r="4.1" fill="#fff" stroke="#0a66ff" stroke-width="1.3"/><circle cx="382.4" cy="460.4" r="4.1" fill="#fff" stroke="#0a66ff" stroke-width="1.3"/><path d="M323.0 445.9 H336.6 M329.8 439.2 V452.9" stroke="#0a66ff" stroke-width="2.8"/><circle cx="403.2" cy="459.8" r="13.4" fill="none" stroke="#0a66ff" stroke-width="3.1"/><path d="M397.0 465.2 L403.2 451.8 L409.4 465.2 M398.9 461 H407.5" fill="none" stroke="#0a66ff" stroke-width="2.6" stroke-linejoin="round"/><path d="M687.0 461.6 H786.3" stroke="#0a66ff" stroke-width="3.1"/><circle cx="687.0" cy="460.6" r="4.1" fill="#fff" stroke="#0a66ff" stroke-width="1.3"/><circle cx="786.3" cy="460.6" r="4.1" fill="#fff" stroke="#0a66ff" stroke-width="1.3"/><path d="M726.9 445.9 H740.4 M733.6 439.2 V452.9" stroke="#0a66ff" stroke-width="2.8"/><circle cx="807.1" cy="459.8" r="13.4" fill="none" stroke="#0a66ff" stroke-width="3.1"/><path d="M800.9 465.2 L807.1 451.8 L813.3 465.2 M802.8 461 H811.4" fill="none" stroke="#0a66ff" stroke-width="2.6" stroke-linejoin="round"/><path d="M1090.7 461.6 H1190.0" stroke="#0a66ff" stroke-width="3.1"/><circle cx="1090.7" cy="460.6" r="4.1" fill="#fff" stroke="#0a66ff" stroke-width="1.3"/><circle cx="1190.0" cy="460.6" r="4.1" fill="#fff" stroke="#0a66ff" stroke-width="1.3"/><path d="M1130.5 445.9 H1144.1 M1137.3 439.2 V452.9" stroke="#0a66ff" stroke-width="2.8"/><circle cx="1210.8" cy="459.8" r="13.4" fill="none" stroke="#0a66ff" stroke-width="3.1"/><path d="M1204.6 465.2 L1210.8 451.8 L1217.0 465.2 M1206.5 461 H1215.1" fill="none" stroke="#0a66ff" stroke-width="2.6" stroke-linejoin="round"/><path d="M1494.7 461.6 H1594.0" stroke="#0a66ff" stroke-width="3.1"/><circle cx="1494.7" cy="460.6" r="4.1" fill="#fff" stroke="#0a66ff" stroke-width="1.3"/><circle cx="1594.0" cy="460.6" r="4.1" fill="#fff" stroke="#0a66ff" stroke-width="1.3"/><path d="M1534.5 445.9 H1548.1 M1541.3 439.2 V452.9" stroke="#0a66ff" stroke-width="2.8"/><circle cx="1614.8" cy="459.8" r="13.4" fill="none" stroke="#0a66ff" stroke-width="3.1"/><path d="M1608.6 465.2 L1614.8 451.8 L1621.0 465.2 M1610.5 461 H1619.1" fill="none" stroke="#0a66ff" stroke-width="2.6" stroke-linejoin="round"/><path d="M1898.5 461.8 H1997.6" stroke="#0a66ff" stroke-width="3.1"/><circle cx="1898.5" cy="460.8" r="4.1" fill="#fff" stroke="#0a66ff" stroke-width="1.3"/><circle cx="1997.6" cy="460.8" r="4.1" fill="#fff" stroke="#0a66ff" stroke-width="1.3"/><path d="M2155.4 461.8 H2254.9" stroke="#0a66ff" stroke-width="3.1"/><circle cx="2155.4" cy="460.8" r="4.1" fill="#fff" stroke="#0a66ff" stroke-width="1.3"/><circle cx="2254.9" cy="460.8" r="4.1" fill="#fff" stroke="#0a66ff" stroke-width="1.3"/><path d="M664.68 450.27 L667.92 450.08 L667.92 455.32 L664.68 455.13 L662.25 459.35 L664.03 462.06 L659.49 464.68 L658.03 461.78 L653.17 461.78 L651.71 464.68 L647.17 462.06 L648.95 459.35 L646.52 455.13 L643.28 455.32 L643.28 450.08 L646.52 450.27 L648.95 446.05 L647.17 443.34 L651.71 440.72 L653.17 443.62 L658.03 443.62 L659.49 440.72 L664.03 443.34 L662.25 446.05Z M650.20 452.70 a5.40 5.40 0 1 0 10.80 0 a5.40 5.40 0 1 0 -10.80 0Z" fill="#626566" fill-rule="evenodd"/><path d="M1068.38 450.27 L1071.62 450.08 L1071.62 455.32 L1068.38 455.13 L1065.95 459.35 L1067.73 462.06 L1063.19 464.68 L1061.73 461.78 L1056.87 461.78 L1055.41 464.68 L1050.87 462.06 L1052.65 459.35 L1050.22 455.13 L1046.98 455.32 L1046.98 450.08 L1050.22 450.27 L1052.65 446.05 L1050.87 443.34 L1055.41 440.72 L1056.87 443.62 L1061.73 443.62 L1063.19 440.72 L1067.73 443.34 L1065.95 446.05Z M1053.90 452.70 a5.40 5.40 0 1 0 10.80 0 a5.40 5.40 0 1 0 -10.80 0Z" fill="#626566" fill-rule="evenodd"/><path d="M1472.38 450.27 L1475.62 450.08 L1475.62 455.32 L1472.38 455.13 L1469.95 459.35 L1471.73 462.06 L1467.19 464.68 L1465.73 461.78 L1460.87 461.78 L1459.41 464.68 L1454.87 462.06 L1456.65 459.35 L1454.22 455.13 L1450.98 455.32 L1450.98 450.08 L1454.22 450.27 L1456.65 446.05 L1454.87 443.34 L1459.41 440.72 L1460.87 443.62 L1465.73 443.62 L1467.19 440.72 L1471.73 443.34 L1469.95 446.05Z M1457.90 452.70 a5.40 5.40 0 1 0 10.80 0 a5.40 5.40 0 1 0 -10.80 0Z" fill="#626566" fill-rule="evenodd"/><path d="M1876.38 450.27 L1879.62 450.08 L1879.62 455.32 L1876.38 455.13 L1873.95 459.35 L1875.73 462.06 L1871.19 464.68 L1869.73 461.78 L1864.87 461.78 L1863.41 464.68 L1858.87 462.06 L1860.65 459.35 L1858.22 455.13 L1854.98 455.32 L1854.98 450.08 L1858.22 450.27 L1860.65 446.05 L1858.87 443.34 L1863.41 440.72 L1864.87 443.62 L1869.73 443.62 L1871.19 440.72 L1875.73 443.34 L1873.95 446.05Z M1861.90 452.70 a5.40 5.40 0 1 0 10.80 0 a5.40 5.40 0 1 0 -10.80 0Z" fill="#626566" fill-rule="evenodd"/><path d="M2127.03 685.69 L2128.06 682.80 L2130.94 682.80 L2131.97 685.69 L2134.85 687.35 L2137.88 686.80 L2139.31 689.29 L2137.33 691.64 L2137.33 694.96 L2139.31 697.31 L2137.88 699.80 L2134.85 699.25 L2131.97 700.91 L2130.94 703.80 L2128.06 703.80 L2127.03 700.91 L2124.15 699.25 L2121.12 699.80 L2119.69 697.31 L2121.67 694.96 L2121.67 691.64 L2119.69 689.29 L2121.12 686.80 L2124.15 687.35Z" fill="none" stroke="#0a66ff" stroke-width="1.9" stroke-linejoin="round"/><circle cx="2129.5" cy="693.3" r="3.7" fill="none" stroke="#0a66ff" stroke-width="1.9"/><g fill="none" stroke="#d0d0d0" stroke-width="1.7"><rect x="2286" y="689.9" width="6" height="6"/><rect x="2301.8" y="681.9" width="6.2" height="4.3"/><rect x="2301.8" y="691.1" width="6.2" height="4"/><rect x="2301.8" y="699.9" width="6.2" height="4.2"/><path d="M2289 689.9 V684 H2301.8 M2292 693 H2301.8 M2289 695.9 V702 H2301.8"/></g><path d="M816.5 894.5 L825.3 904 L834 894.5" fill="none" stroke="#c0c4cc" stroke-width="1.5"/><g fill="none" stroke="#0a66ff" stroke-width="1.7" stroke-linecap="round"><rect x="868.7" y="888.7" width="17.9" height="17.5" rx="3"/><path d="M871.3 892.2 H876.2 M873.7 892.2 V898 M878.2 894.5 H882.6 M878.2 898.1 H882.6 M871.3 902.3 H882.6"/></g><path d="M2166 1408.5 L2179 1395.5 M2171.5 1408.5 L2179 1401" stroke="#777" stroke-width="1.3"/></svg></body></html>
